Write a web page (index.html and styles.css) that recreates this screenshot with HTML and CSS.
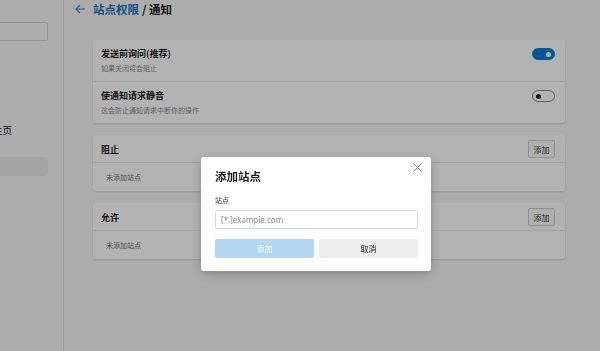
FILE: index.html
```html
<!DOCTYPE html>
<html lang="zh-CN">
<head>
<meta charset="UTF-8">
<meta name="viewport" content="width=device-width, initial-scale=1.0">
<title>站点权限 / 通知</title>
<link rel="stylesheet" href="styles.css">
</head>
<body>
<div class="page">
    <aside class="sidebar">
        <div class="search"></div>
        <div class="nav-item">主页</div>
        <div class="nav-item selected"></div>
    </aside>
    <main class="main">
        <div class="heading">
            <span class="back">
                <svg width="11" height="10" viewBox="0 0 11 10"><path d="M10 5H1.5M5 1L1 5l4 4" fill="none" stroke="#2a86d6" stroke-width="1.1"/></svg>
            </span>
            <span class="crumb">站点权限</span>
            <span class="slash">/ 通知</span>
        </div>

        <section class="card">
            <div class="row">
                <div class="row-text">
                    <div class="title">发送前询问(推荐)</div>
                    <div class="sub">如果关闭将会阻止</div>
                </div>
                <span class="toggle on"></span>
            </div>
            <div class="row">
                <div class="row-text">
                    <div class="title">使通知请求静音</div>
                    <div class="sub">这会防止通知请求中断你的操作</div>
                </div>
                <span class="toggle"></span>
            </div>
        </section>

        <section class="card">
            <div class="list-head">
                <div class="title">阻止</div>
                <button class="small-btn">添加</button>
            </div>
            <div class="empty">未添加站点</div>
        </section>

        <section class="card">
            <div class="list-head">
                <div class="title">允许</div>
                <button class="small-btn">添加</button>
            </div>
            <div class="empty">未添加站点</div>
        </section>
    </main>
</div>

<div class="overlay"></div>

<div class="dialog">
    <span class="close">
        <svg width="9" height="9" viewBox="0 0 9 9"><path d="M0.5 0.5l8 8M8.5 0.5l-8 8" stroke="#7a7a7a" stroke-width="1"/></svg>
    </span>
    <h2>添加站点</h2>
    <label class="field-label">站点</label>
    <input type="text" class="field" placeholder="[*.]example.com">
    <div class="actions">
        <button class="btn primary">添加</button>
        <button class="btn">取消</button>
    </div>
</div>
</body>
</html>
```

FILE: styles.css
```css
body {
    margin: 0;
    width: 600px;
    height: 351px;
    overflow: hidden;
    background-color: #f7f7f7;
    font-family: "Noto Sans CJK SC", "Noto Sans", sans-serif;
    color: #1b1b1b;
}
.page {
    display: flex;
    height: 351px;
}
.sidebar {
    width: 63px;
    flex-shrink: 0;
    border-right: 1px solid #dcdcdc;
    padding-top: 22px;
}
.search {
    width: 47px;
    height: 17px;
    border: 1px solid #d6d6d6;
    border-left: none;
    border-radius: 0 2px 2px 0;
    background-color: #f9f9f9;
}
.nav-item {
    width: 48px;
    height: 19px;
    font-size: 9.5px;
    line-height: 19px;
    text-indent: -7px;
    color: #222;
    margin-top: 80px;
    border-radius: 0 3px 3px 0;
}
.nav-item.selected {
    margin-top: 17px;
    background-color: #ebebeb;
}
.main {
    flex: 1;
    padding-left: 29px;
}
.heading {
    display: flex;
    align-items: center;
    height: 14px;
    padding-top: 2px;
    margin-bottom: 24px;
    font-size: 11.5px;
    font-weight: bold;
}
.back {
    display: flex;
    margin-left: -18px;
    margin-right: 7px;
}
.crumb {
    color: #1572c4;
}
.slash {
    margin-left: 3px;
    color: #1b1b1b;
}
.card {
    width: 472px;
    background-color: #fff;
    border-radius: 3px;
    box-shadow: 0 1px 2px rgba(0, 0, 0, 0.14);
    margin-bottom: 12px;
}
.row {
    display: flex;
    align-items: flex-start;
    justify-content: space-between;
    padding: 8px 10px 8px 8px;
    height: 25px;
}
.row + .row {
    border-top: 1px solid #ebebeb;
}
.title {
    font-size: 9px;
    line-height: 11px;
    font-weight: bold;
    color: #1b1b1b;
}
.sub {
    font-size: 7px;
    line-height: 10px;
    margin-top: 4px;
    color: #8a8a8a;
}
.toggle {
    position: relative;
    width: 21px;
    height: 10px;
    border: 1px solid #8a8a8a;
    border-radius: 6px;
    background-color: #fff;
}
.toggle::after {
    content: "";
    position: absolute;
    left: 3px;
    top: 2.5px;
    width: 5px;
    height: 5px;
    border-radius: 50%;
    background-color: #1b1b1b;
}
.toggle.on {
    background-color: #0a7ad6;
    border-color: #0a7ad6;
}
.toggle.on::after {
    left: auto;
    right: 3px;
    background-color: #fff;
}
.list-head {
    display: flex;
    align-items: center;
    justify-content: space-between;
    padding: 5px 10px 4px 8px;
    border-bottom: 1px solid #ebebeb;
}
.small-btn {
    width: 27px;
    height: 18px;
    padding: 0;
    border: 1px solid #cfcfcf;
    border-radius: 2px;
    background-color: #fbfbfb;
    font-family: inherit;
    font-size: 8px;
    color: #333;
}
.empty {
    height: 28px;
    line-height: 28px;
    padding-left: 13px;
    font-size: 7px;
    color: #6f6f6f;
}
.overlay {
    position: fixed;
    inset: 0;
    background-color: rgba(0, 0, 0, 0.3);
}
.dialog {
    position: absolute;
    left: 201px;
    top: 157px;
    width: 230px;
    box-sizing: border-box;
    padding: 12px 13px 13px 14px;
    background-color: #fff;
    border-radius: 3px;
    box-shadow: 0 3px 10px rgba(0, 0, 0, 0.22);
}
.close {
    position: absolute;
    right: 9px;
    top: 6px;
    display: flex;
}
.dialog h2 {
    margin: 0;
    font-size: 11.5px;
    line-height: 14px;
    font-weight: bold;
    color: #1b1b1b;
}
.field-label {
    display: block;
    margin-top: 12px;
    font-size: 7px;
    line-height: 10px;
    color: #333;
}
.field {
    display: block;
    width: 100%;
    height: 19px;
    margin-top: 5px;
    box-sizing: border-box;
    border: 1px solid #d9d9d9;
    border-radius: 2px;
    padding: 0 5px;
    font-family: "Noto Sans", "Noto Sans CJK SC", sans-serif;
    font-size: 8px;
    outline: none;
}
.field::placeholder {
    color: #8d8d8d;
}
.actions {
    display: flex;
    gap: 5px;
    margin-top: 10px;
}
.btn {
    flex: 1;
    height: 19px;
    padding: 0;
    border: none;
    border-radius: 2px;
    background-color: #ededed;
    font-family: inherit;
    font-size: 8px;
    color: #1b1b1b;
}
.btn.primary {
    background-color: #b3d7f3;
    color: #fff;
}
```
